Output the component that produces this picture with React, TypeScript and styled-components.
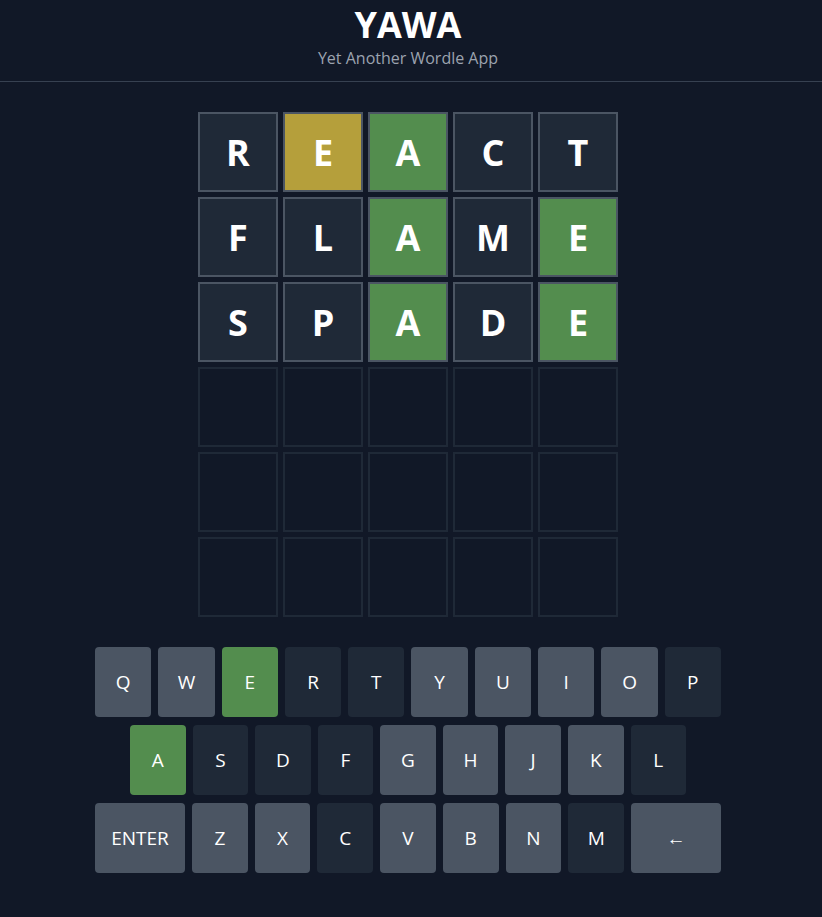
import React from "react";
import styled, { createGlobalStyle } from "styled-components";

const GlobalStyle = createGlobalStyle`
  html, body {
    margin: 0;
    padding: 0;
    background: #111827;
    color: #ffffff;
    font-family: "Open Sans", "Noto Sans", "Liberation Sans", sans-serif;
  }
  * { box-sizing: border-box; }
`;

type TileState = "absent" | "present" | "correct" | "empty";
type KeyState = "unused" | "absent" | "correct";

const tileBg: Record<TileState, string> = {
  absent: "#1f2937",
  present: "#b59f3b",
  correct: "#538d4e",
  empty: "transparent",
};

const keyBg: Record<KeyState, string> = {
  unused: "#4b5563",
  absent: "#1f2937",
  correct: "#538d4e",
};

const Page = styled.div`
  min-height: 917px;
  background: #111827;
`;

const Header = styled.header`
  display: flex;
  flex-direction: column;
  align-items: center;
  padding: 5px 6px 11px 0;
  border-bottom: 1px solid #374151;
`;

const Title = styled.h1`
  margin: 0;
  font-size: 36px;
  line-height: 40px;
  font-weight: 700;
  color: #ffffff;
`;

const Subtitle = styled.p`
  margin: 1px 0 0;
  font-size: 16px;
  line-height: 24px;
  color: #9ca3af;
`;

const Main = styled.main`
  display: flex;
  flex-direction: column;
  align-items: center;
  padding: 30px 6px 0 0;
  gap: 30px;
`;

const Board = styled.div`
  display: grid;
  grid-template-columns: repeat(5, 80px);
  grid-auto-rows: 80px;
  gap: 5px;
`;

const Tile = styled.div<{ $state: TileState }>`
  display: flex;
  align-items: center;
  justify-content: center;
  background: ${(p) => tileBg[p.$state]};
  border: 2px solid ${(p) => (p.$state === "empty" ? "#1f2937" : "#4b5563")};
  font-size: 36px;
  font-weight: 700;
  color: #ffffff;
`;

const Keyboard = styled.div`
  width: 626px;
  display: flex;
  flex-direction: column;
  gap: 8px;
`;

const KeyRow = styled.div<{ $inset?: boolean }>`
  display: flex;
  gap: 7px;
  padding: 0 ${(p) => (p.$inset ? "35px" : "0")};
`;

const Key = styled.button<{ $state: KeyState; $wide?: boolean }>`
  flex: ${(p) => (p.$wide ? "0 0 90px" : "1 1 0")};
  height: 70px;
  border: none;
  border-radius: 4px;
  background: ${(p) => keyBg[p.$state]};
  color: #ffffff;
  font-family: inherit;
  font-size: 19px;
  display: flex;
  align-items: center;
  justify-content: center;
  padding: 0;
  cursor: pointer;
`;

const guesses: { letter: string; state: TileState }[][] = [
  [
    { letter: "R", state: "absent" },
    { letter: "E", state: "present" },
    { letter: "A", state: "correct" },
    { letter: "C", state: "absent" },
    { letter: "T", state: "absent" },
  ],
  [
    { letter: "F", state: "absent" },
    { letter: "L", state: "absent" },
    { letter: "A", state: "correct" },
    { letter: "M", state: "absent" },
    { letter: "E", state: "correct" },
  ],
  [
    { letter: "S", state: "absent" },
    { letter: "P", state: "absent" },
    { letter: "A", state: "correct" },
    { letter: "D", state: "absent" },
    { letter: "E", state: "correct" },
  ],
];

const absentKeys = new Set(["R", "T", "C", "F", "L", "M", "S", "P", "D"]);
const correctKeys = new Set(["E", "A"]);

const keyState = (k: string): KeyState =>
  correctKeys.has(k) ? "correct" : absentKeys.has(k) ? "absent" : "unused";

const rows = [
  "QWERTYUIOP".split(""),
  "ASDFGHJKL".split(""),
  ["ENTER", ..."ZXCVBNM".split(""), "←"],
];

export default function App() {
  const tiles: { letter: string; state: TileState }[] = [];
  for (let r = 0; r < 6; r++) {
    for (let c = 0; c < 5; c++) {
      tiles.push(guesses[r]?.[c] ?? { letter: "", state: "empty" });
    }
  }
  return (
    <Page>
      <GlobalStyle />
      <Header>
        <Title>YAWA</Title>
        <Subtitle>Yet Another Wordle App</Subtitle>
      </Header>
      <Main>
        <Board>
          {tiles.map((t, i) => (
            <Tile key={i} $state={t.state}>
              {t.letter}
            </Tile>
          ))}
        </Board>
        <Keyboard>
          {rows.map((row, ri) => (
            <KeyRow key={ri} $inset={ri === 1}>
              {row.map((k) => (
                <Key
                  key={k}
                  $state={k.length > 1 || k === "←" ? "unused" : keyState(k)}
                  $wide={k === "ENTER" || k === "←"}
                >
                  {k}
                </Key>
              ))}
            </KeyRow>
          ))}
        </Keyboard>
      </Main>
    </Page>
  );
}
